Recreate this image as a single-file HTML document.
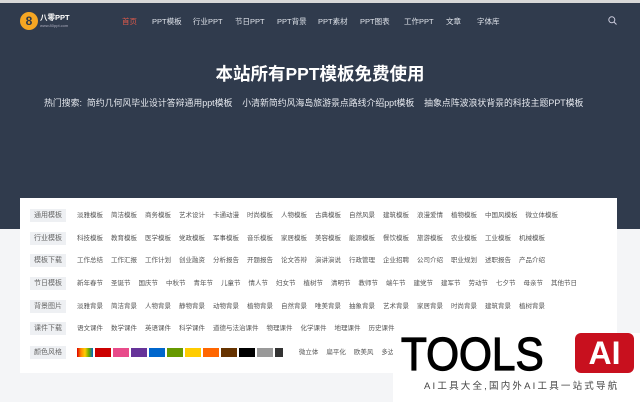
<!DOCTYPE html><html><head><meta charset="utf-8"><style>
*{margin:0;padding:0;box-sizing:border-box}
body{width:640px;height:402px;overflow:hidden;background:#f4f5f7;font-family:"Liberation Sans","Noto Sans CJK SC",sans-serif;position:relative}
.top{position:absolute;left:0;top:0;width:640px;height:3px;background:#d8d8d8}
.hero{position:absolute;left:0;top:3px;width:640px;height:226px;background:#303b4d}
.nav a{position:absolute;top:16px;font-size:7.5px;color:#dfe3ea}
.logo{position:absolute;left:20px;top:12px;width:18px;height:18px;border-radius:50%;background:#f5a623;color:#2e3849;font-weight:bold;font-size:12px;text-align:center;line-height:18px}
h1{position:absolute;left:0;width:640px;top:61px;text-align:center;color:#fff;font-size:17.5px;font-weight:bold}
.hot{position:absolute;left:44px;top:96px;font-size:8.9px;color:#e6e9ef;white-space:nowrap}
.panel{position:absolute;left:20px;top:198px;width:597px;height:175px;background:#fff}
.row{position:absolute;left:10px;font-size:6.5px;color:#555;white-space:nowrap}
.row b{display:inline-block;font-weight:normal;background:#eef0f3;color:#666;font-size:7px;width:36px;height:13px;line-height:13px;text-align:center;margin-right:11px}
.row span{margin-right:8px}
.sw{display:inline-block;width:16px;height:9px;margin-right:2px;vertical-align:middle}
.wm{position:absolute;left:393px;top:333px;width:247px;height:69px;background:#fff}
</style></head><body>
<div class="top"></div>
<div class="hero"></div>
<div class="logo">8</div>
<div style="position:absolute;left:40px;top:12px;color:#fff;font-size:7.5px;font-weight:bold">八零PPT</div>
<div style="position:absolute;left:40px;top:23px;color:#aab;font-size:4px">www.80ppt.com</div>
<div class="nav"><a style="left:122px;color:#e05a4a">首页</a><a style="left:152px">PPT模板</a><a style="left:193px">行业PPT</a><a style="left:235px">节日PPT</a><a style="left:277px">PPT背景</a><a style="left:318px">PPT素材</a><a style="left:360px">PPT图表</a><a style="left:404px">工作PPT</a><a style="left:446px">文章</a><a style="left:477px">字体库</a></div>
<svg style="position:absolute;left:608px;top:16px" width="9" height="9"><circle cx="3.8" cy="3.8" r="3" fill="none" stroke="#ccd" stroke-width="1"/><line x1="6" y1="6" x2="8.5" y2="8.5" stroke="#ccd" stroke-width="1"/></svg>
<h1>本站所有PPT模板免费使用</h1>
<div class="hot">热门搜索:&nbsp;&nbsp;简约几何风毕业设计答辩通用ppt模板&nbsp;&nbsp;&nbsp;&nbsp;小清新简约风海岛旅游景点路线介绍ppt模板&nbsp;&nbsp;&nbsp;&nbsp;抽象点阵波浪状背景的科技主题PPT模板</div>
<div class="panel">
<div class="row" style="top:11px"><b>通用模板</b><span>淡雅模板</span><span>简洁模板</span><span>商务模板</span><span>艺术设计</span><span>卡通动漫</span><span>时尚模板</span><span>人物模板</span><span>古典模板</span><span>自然风景</span><span>建筑模板</span><span>浪漫爱情</span><span>植物模板</span><span>中国风模板</span><span>微立体模板</span></div>
<div class="row" style="top:34px"><b>行业模板</b><span>科技模板</span><span>教育模板</span><span>医学模板</span><span>党政模板</span><span>军事模板</span><span>音乐模板</span><span>家居模板</span><span>美容模板</span><span>能源模板</span><span>餐饮模板</span><span>旅游模板</span><span>农业模板</span><span>工业模板</span><span>机械模板</span></div>
<div class="row" style="top:56px"><b>模板下载</b><span>工作总结</span><span>工作汇报</span><span>工作计划</span><span>创业融资</span><span>分析报告</span><span>开题报告</span><span>论文答辩</span><span>演讲演说</span><span>行政管理</span><span>企业招聘</span><span>公司介绍</span><span>职业规划</span><span>述职报告</span><span>产品介绍</span></div>
<div class="row" style="top:79px"><b>节日模板</b><span>新年春节</span><span>圣诞节</span><span>国庆节</span><span>中秋节</span><span>青年节</span><span>儿童节</span><span>情人节</span><span>妇女节</span><span>植树节</span><span>清明节</span><span>教师节</span><span>端午节</span><span>建党节</span><span>建军节</span><span>劳动节</span><span>七夕节</span><span>母亲节</span><span>其他节日</span></div>
<div class="row" style="top:102px"><b>背景图片</b><span>淡雅背景</span><span>简洁背景</span><span>人物背景</span><span>静物背景</span><span>动物背景</span><span>植物背景</span><span>自然背景</span><span>唯美背景</span><span>抽象背景</span><span>艺术背景</span><span>家居背景</span><span>时尚背景</span><span>建筑背景</span><span>植树背景</span></div>
<div class="row" style="top:124px"><b>课件下载</b><span>语文课件</span><span>数学课件</span><span>英语课件</span><span>科学课件</span><span>道德与法治课件</span><span>物理课件</span><span>化学课件</span><span>地理课件</span><span>历史课件</span></div>
<div class="row" style="top:148px"><b>颜色风格</b><i class="sw" style="background:linear-gradient(90deg,#d00,#f80,#fc0,#6a0,#06c)"></i><i class="sw" style="background:#cc0000"></i><i class="sw" style="background:#e84b8a"></i><i class="sw" style="background:#663399"></i><i class="sw" style="background:#0066cc"></i><i class="sw" style="background:#669900"></i><i class="sw" style="background:#ffcc00"></i><i class="sw" style="background:#ff6600"></i><i class="sw" style="background:#663300"></i><i class="sw" style="background:#000"></i><i class="sw" style="background:#999"></i><i class="sw" style="background:#333;width:8px"></i><i class="sw" style="background:#fff;width:10px"></i> <span>微立体</span><span>扁平化</span><span>欧美风</span><span>多边</span></div>
</div>
<div class="wm">
<div style="position:absolute;left:8px;top:-4px;font-size:46px;color:#000;line-height:50px;-webkit-text-stroke:1.2px #000;transform:scaleX(0.92);transform-origin:left">TOOLS</div>
<div style="position:absolute;left:182px;top:0;width:59px;height:40px;background:#c8101e;border-radius:6px;color:#fff;font-size:32px;font-weight:bold;text-align:center;line-height:40px">AI</div>
<div style="position:absolute;left:31px;top:45px;font-size:9.5px;color:#444;letter-spacing:2.2px;white-space:nowrap">AI工具大全,国内外AI工具一站式导航</div>
</div>
</body></html>
